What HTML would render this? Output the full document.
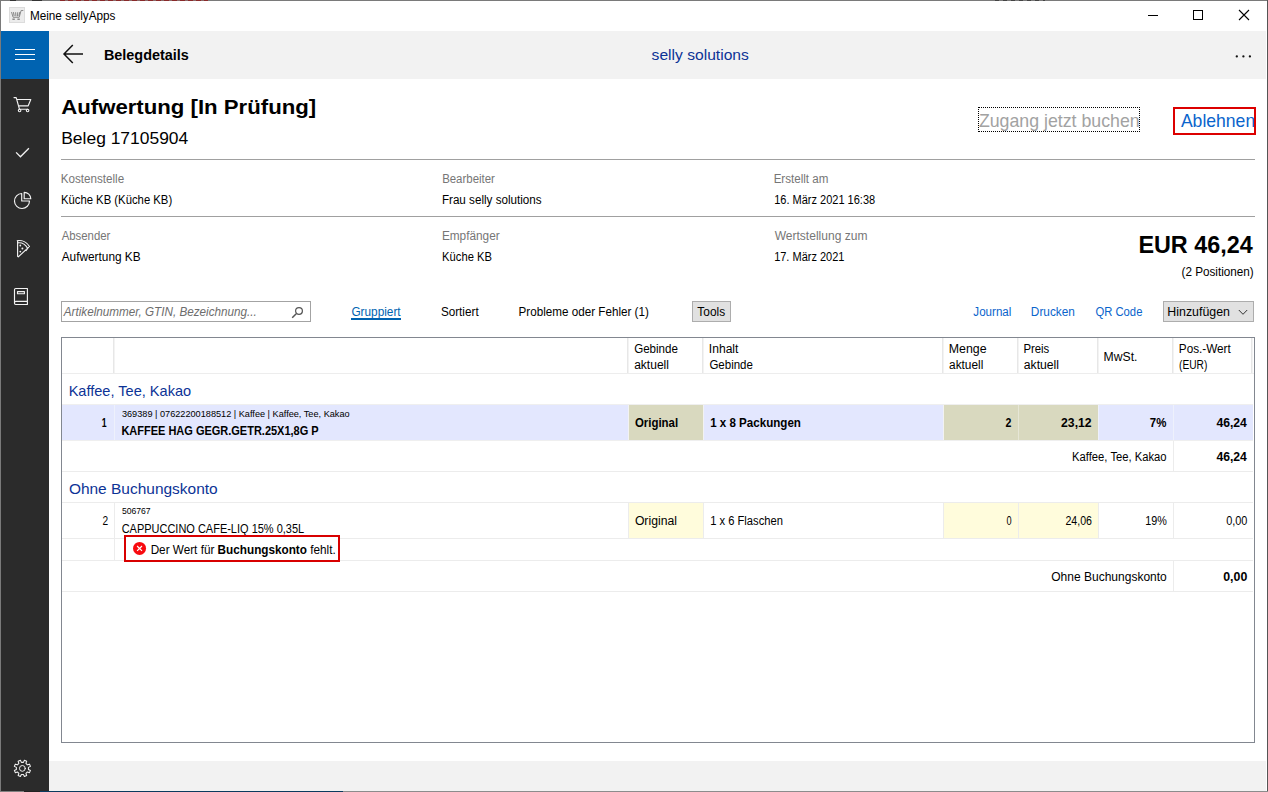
<!DOCTYPE html>
<html lang="de"><head><meta charset="utf-8"><title>Meine sellyApps</title>
<style>
html,body{margin:0;padding:0;}
body{width:1268px;height:792px;position:relative;overflow:hidden;background:#fff;font-family:"Liberation Sans",sans-serif;}
.a{position:absolute;}
.t{position:absolute;white-space:nowrap;line-height:normal;transform-origin:0 0;font-family:"Liberation Sans",sans-serif;}
.hl{position:absolute;height:1px;background:#ececec;}
.vl{position:absolute;width:1px;background:#ececec;}
svg{position:absolute;overflow:visible;}

</style></head>
<body>
<!-- window frame -->
<div class="a" style="left:0;top:0;width:1268px;height:1px;background:#7a7a7a"></div>
<div class="a" style="left:60px;top:0;width:148px;height:1px;background:repeating-linear-gradient(90deg,#8a2a2a 0 5px,#8a6a6a 5px 8px)"></div><div class="a" style="left:10px;top:0;width:6px;height:1px;background:#333"></div><div class="a" style="left:32px;top:0;width:10px;height:1px;background:#333"></div><div class="a" style="left:995px;top:0;width:50px;height:1px;background:repeating-linear-gradient(90deg,#444 0 4px,#7a7a7a 4px 8px)"></div>
<div class="a" style="left:0;top:0;width:1px;height:792px;background:#7a7a7a"></div>
<div class="a" style="left:1267px;top:0;width:1px;height:792px;background:#555"></div>
<div class="a" style="left:0;top:791px;width:1268px;height:1px;background:linear-gradient(90deg,#808080 0 24px,#222 24px 40px,#0b3a5e 40px 343px,#8c8c8c 343px)"></div>
<!-- title bar icon -->
<div class="a" style="left:9px;top:7px;width:16px;height:16px;background:#ececec;border:1px solid #dcdcdc;box-sizing:border-box"></div>
<svg style="left:9px;top:7px" width="16" height="16" viewBox="0 0 16 16" fill="none" stroke="#8c8c8c" stroke-width="1"><path d="M14.300 3.500h-2.200l-1.900 6.800h-6.100l-1.600-5.300"/><path d="M4.400 5.200l.8 4M6.600 5.200l.3 4M8.700 5.200l-.2 4M10.800 5.200l-.8 4" stroke-width="1.100"/><path d="M3.400 12.200h2.400M8.400 12.200h2.400" stroke-width="1.400"/></svg>
<!-- window controls -->
<div class="a" style="left:1148px;top:15px;width:10px;height:1px;background:#000"></div>
<div class="a" style="left:1193px;top:10px;width:10px;height:10px;border:1px solid #000;box-sizing:border-box"></div>
<svg style="left:1239px;top:10px" width="10" height="10" viewBox="0 0 10 10"><path d="M0 0L10 10M10 0L0 10" stroke="#000" stroke-width="1.1" fill="none"/></svg>
<!-- nav bar -->
<div class="a" style="left:49px;top:31px;width:1217px;height:48px;background:#f2f2f2"></div>
<div class="a" style="left:1px;top:31px;width:48px;height:48px;background:#0063b1"></div>
<div class="a" style="left:15px;top:49px;width:20px;height:1px;background:#fff"></div>
<div class="a" style="left:15px;top:54px;width:20px;height:1px;background:#fff"></div>
<div class="a" style="left:15px;top:59px;width:20px;height:1px;background:#fff"></div>
<svg style="left:63px;top:44px" width="21" height="20" viewBox="0 0 21 20"><path d="M20 10H1.2M9.8 1L1 10l8.800 9" fill="none" stroke="#111" stroke-width="1.5"/></svg>
<svg style="left:1230px;top:50px" width="26" height="12" viewBox="0 0 26 12"><circle cx="6.800" cy="6.400" r="1.150" fill="#111"/><circle cx="13.400" cy="6.400" r="1.150" fill="#111"/><circle cx="19.900" cy="6.400" r="1.150" fill="#111"/></svg>
<!-- sidebar -->
<div class="a" style="left:1px;top:79px;width:48px;height:712px;background:#2b2b2b"></div>
<svg style="left:0;top:0" width="49" height="792" viewBox="0 0 49 792" fill="none" stroke="#f2f2f2" stroke-width="1.15" stroke-linejoin="round" stroke-linecap="round">
 <!-- cart -->
 <path d="M14 97.600h2.200l3.300 11.700h8.200M17 99.500h13.800l-2.600 6.300h-9.300"/><circle cx="19.600" cy="110.500" r="1.250"/><circle cx="27.600" cy="110.500" r="1.250"/>
 <!-- check -->
 <path d="M16.100 152.400l4.350 4.400 8.450-8.600" stroke-width="1.300" stroke-linecap="butt" stroke-linejoin="miter"/>
 <!-- pie -->
 <path d="M21.700 193.500A7.500 7.500 0 1 0 29.500 201H21.700Z"/><path d="M24.200 192.300V198.700H30.800A6.600 6.600 0 0 0 24.200 192.300Z"/>
 <!-- pizza -->
 <path d="M17.600 241V256.200L18.300 256.800L28.600 247.400"/><path d="M17.200 240.700C22 240 27 242.300 29.500 246.500"/><path d="M18.200 242.800C22 242.500 25.500 244.500 27.600 248.200"/><path d="M25.200 250.600q1.200 1 2-.8" stroke-width="1"/>
 <g fill="#f2f2f2" stroke="none"><circle cx="20.300" cy="245.500" r="0.900"/><circle cx="22.400" cy="248.500" r="0.950"/><circle cx="20.300" cy="251.600" r="0.900"/></g>
 <!-- book -->
 <path d="M15.700 288.500H27.400V304.500H15.700Q14.500 304.500 14.500 303.300V289.700Q14.500 288.500 15.700 288.500ZM14.500 302.600Q14.500 301.300 15.800 301.300H27.400M17.500 291.600h6.900v2.100h-6.900z"/>
 <!-- gear -->
 <circle cx="22.400" cy="768.400" r="2.900" stroke-width="1"/>
 <path d="M23.41 762.38 L24.41 760.35 L26.67 761.29 L25.94 763.43 L27.37 764.86 L29.51 764.13 L30.45 766.39 L28.42 767.39 L28.42 769.41 L30.45 770.41 L29.51 772.67 L27.37 771.94 L25.94 773.37 L26.67 775.51 L24.41 776.45 L23.41 774.42 L21.39 774.42 L20.39 776.45 L18.13 775.51 L18.86 773.37 L17.43 771.94 L15.29 772.67 L14.35 770.41 L16.38 769.41 L16.38 767.39 L14.35 766.39 L15.29 764.13 L17.43 764.86 L18.86 763.43 L18.13 761.29 L20.39 760.35 L21.39 762.38Z" stroke-width="1.050"/>
</svg>
<!-- footer strip -->
<div class="a" style="left:49px;top:761px;width:1217px;height:30px;background:#f2f2f2"></div>
<!-- heading buttons -->
<div class="a" style="left:978px;top:107px;width:162px;height:25px;border:1px dotted #000;box-sizing:border-box"></div>
<div class="a" style="left:1173px;top:107px;width:83px;height:28px;border:2px solid #dc0000;box-sizing:border-box;z-index:2"></div>
<!-- rules -->
<div class="a" style="left:61px;top:159px;width:1194px;height:1px;background:#a0a0a0"></div>
<div class="a" style="left:61px;top:216px;width:1194px;height:1px;background:#a0a0a0"></div>
<!-- search box -->
<div class="a" style="left:61px;top:301px;width:250px;height:21px;border:1px solid #a3a3a3;box-sizing:border-box;background:#fff"></div>
<svg style="left:291px;top:306px" width="13" height="13" viewBox="0 0 13 13"><circle cx="8" cy="5" r="3.400" fill="none" stroke="#555" stroke-width="1.200"/><path d="M5.500 7.500L1.200 11.800" stroke="#555" stroke-width="1.500"/></svg>
<!-- gruppiert underline -->
<div class="a" style="left:351px;top:318px;width:50px;height:2px;background:#0063b1"></div>
<!-- tools button -->
<div class="a" style="left:692px;top:301px;width:39px;height:21px;border:1px solid #adadad;box-sizing:border-box;background:#e1e1e1"></div>
<!-- hinzufügen -->
<div class="a" style="left:1163px;top:301px;width:91px;height:21px;border:1px solid #adadad;box-sizing:border-box;background:#e1e1e1"></div>
<svg style="left:1238px;top:309px" width="10" height="7" viewBox="0 0 10 7"><path d="M0.800 1L5 5.300L9.200 1" fill="none" stroke="#333" stroke-width="1"/></svg>
<!-- table -->
<div class="a" style="left:61px;top:337px;width:1194px;height:406px;border:1px solid #828790;box-sizing:border-box;background:#fff"></div>
<!-- header lines -->
<div class="hl" style="left:62px;top:373px;width:1192px;background:#ededed"></div>
<div class="vl" style="left:113px;top:338px;height:35px;background:#e7e7e7"></div><div class="vl" style="left:114px;top:338px;height:35px;background:#f3f3f3"></div>
<div class="vl" style="left:627px;top:338px;height:35px;background:#e7e7e7"></div><div class="vl" style="left:628px;top:338px;height:35px;background:#f3f3f3"></div>
<div class="vl" style="left:702px;top:338px;height:35px;background:#e7e7e7"></div><div class="vl" style="left:703px;top:338px;height:35px;background:#f3f3f3"></div>
<div class="vl" style="left:942px;top:338px;height:35px;background:#e7e7e7"></div><div class="vl" style="left:943px;top:338px;height:35px;background:#f3f3f3"></div>
<div class="vl" style="left:1017px;top:338px;height:35px;background:#e7e7e7"></div><div class="vl" style="left:1018px;top:338px;height:35px;background:#f3f3f3"></div>
<div class="vl" style="left:1097px;top:338px;height:35px;background:#e7e7e7"></div><div class="vl" style="left:1098px;top:338px;height:35px;background:#f3f3f3"></div>
<div class="vl" style="left:1172px;top:338px;height:35px;background:#e7e7e7"></div><div class="vl" style="left:1173px;top:338px;height:35px;background:#f3f3f3"></div>
<div class="vl" style="left:1251px;top:338px;height:35px;background:#e7e7e7"></div><div class="vl" style="left:1252px;top:338px;height:35px;background:#f3f3f3"></div>
<!-- row 1 -->
<div class="hl" style="left:62px;top:404px;width:1191px;background:#efefef"></div>
<div class="hl" style="left:62px;top:440px;width:1191px;background:#efefef"></div>
<div class="a" style="left:62px;top:405px;width:1191px;height:35px;background:#e3e7fe"></div>
<div class="a" style="left:629px;top:405px;width:74px;height:35px;background:#d9d9bf"></div>
<div class="a" style="left:944px;top:405px;width:74px;height:35px;background:#d9d9bf"></div>
<div class="a" style="left:1019px;top:405px;width:79px;height:35px;background:#d9d9bf"></div>
<div class="vl" style="left:114px;top:405px;height:35px;background:#eef1fc"></div>
<div class="vl" style="left:628px;top:405px;height:35px;background:#f2f2f2"></div>
<div class="vl" style="left:703px;top:405px;height:35px;background:#f2f2f2"></div>
<div class="vl" style="left:943px;top:405px;height:35px;background:#f2f2f2"></div>
<div class="vl" style="left:1018px;top:405px;height:35px;background:#e6e6d6"></div>
<div class="vl" style="left:1098px;top:405px;height:35px;background:#eef1fc"></div>
<div class="vl" style="left:1173px;top:405px;height:35px;background:#eef1fc"></div>
<!-- subtotal 1 -->
<div class="hl" style="left:62px;top:471px;width:1191px"></div>
<div class="vl" style="left:1173px;top:441px;height:30px"></div>
<!-- group 2 -->
<div class="hl" style="left:62px;top:502px;width:1191px"></div>
<div class="a" style="left:629px;top:503px;width:74px;height:35px;background:#fffcdc"></div>
<div class="a" style="left:944px;top:503px;width:74px;height:35px;background:#fffcdc"></div>
<div class="a" style="left:1019px;top:503px;width:79px;height:35px;background:#fffcdc"></div>
<div class="hl" style="left:62px;top:538px;width:1191px"></div>
<div class="hl" style="left:62px;top:560px;width:1191px"></div>
<div class="hl" style="left:62px;top:591px;width:1191px"></div>
<div class="vl" style="left:114px;top:503px;height:57px"></div>
<div class="vl" style="left:628px;top:503px;height:35px"></div>
<div class="vl" style="left:703px;top:503px;height:35px"></div>
<div class="vl" style="left:943px;top:503px;height:35px"></div>
<div class="vl" style="left:1018px;top:503px;height:35px"></div>
<div class="vl" style="left:1098px;top:503px;height:35px"></div>
<div class="vl" style="left:1173px;top:503px;height:35px"></div>
<div class="vl" style="left:1173px;top:561px;height:30px"></div>
<!-- error box -->
<div class="a" style="left:124px;top:535px;width:216px;height:27px;border:2px solid #d80000;box-sizing:border-box;background:#fff;z-index:2"></div>
<svg style="left:133px;top:542px;z-index:3" width="13" height="13" viewBox="0 0 13 13"><circle cx="6.550" cy="6.450" r="6.500" fill="#f80a0f"/><path d="M4.100 4l4.900 4.900M9 4l-4.900 4.900" stroke="#fff" stroke-width="1.150"/></svg>

<div id="texts">
<span class="t" style="left:29px;top:9px;font-size:12px;color:#000;transform:translateX(0.89px) scaleX(0.9788);">Meine sellyApps</span>
<span class="t" style="left:103px;top:46px;font-size:15px;color:#000;font-weight:700;transform:translateX(0.88px) scaleX(0.9621);">Belegdetails</span>
<span class="t" style="left:651px;top:46px;font-size:15.5px;color:#0c3396;transform:translateX(0.59px) scaleX(1.0079);">selly solutions</span>
<span class="t" style="left:61px;top:96px;font-size:20px;color:#000;font-weight:700;transform:translateX(0.20px) scaleX(1.1090);">Aufwertung [In Prüfung]</span>
<span class="t" style="left:61px;top:129px;font-size:16.8px;color:#000;transform:translateX(0.23px) scaleX(1.0391);">Beleg 17105904</span>
<span class="t" style="left:978px;top:110px;font-size:18.5px;color:#a2a2a2;transform:translateX(0.89px) scaleX(0.9589);">Zugang jetzt buchen</span>
<span class="t" style="left:1180px;top:110px;font-size:18.5px;color:#0a64cc;transform:translateX(0.90px) scaleX(0.9499);">Ablehnen</span>
<span class="t" style="left:60px;top:172px;font-size:12px;color:#767676;transform:translateX(0.63px) scaleX(0.9717);">Kostenstelle</span>
<span class="t" style="left:60px;top:193px;font-size:12px;color:#000;transform:translateX(0.89px) scaleX(0.9425);">Küche KB (Küche KB)</span>
<span class="t" style="left:61px;top:229px;font-size:12px;color:#767676;transform:translateX(0.65px) scaleX(0.9489);">Absender</span>
<span class="t" style="left:61px;top:250px;font-size:12px;color:#000;transform:translateX(0.65px) scaleX(0.9870);">Aufwertung KB</span>
<span class="t" style="left:442px;top:172px;font-size:12px;color:#767676;transform:translateX(0.13px) scaleX(0.9530);">Bearbeiter</span>
<span class="t" style="left:441px;top:193px;font-size:12px;color:#000;transform:translateX(0.89px) scaleX(0.9713);">Frau selly solutions</span>
<span class="t" style="left:441px;top:229px;font-size:12px;color:#767676;transform:translateX(0.88px) scaleX(0.9841);">Empfänger</span>
<span class="t" style="left:442px;top:250px;font-size:12px;color:#000;transform:translateX(0.12px) scaleX(0.9330);">Küche KB</span>
<span class="t" style="left:773px;top:172px;font-size:12px;color:#767676;transform:translateX(0.63px) scaleX(0.9667);">Erstellt am</span>
<span class="t" style="left:774px;top:193px;font-size:12px;color:#000;transform:translateX(0.14px) scaleX(0.9177);">16. März 2021 16:38</span>
<span class="t" style="left:774px;top:229px;font-size:12px;color:#767676;transform:translateX(0.65px) scaleX(1.0030);">Wertstellung zum</span>
<span class="t" style="left:774px;top:250px;font-size:12px;color:#000;transform:translateX(0.14px) scaleX(0.9160);">17. März 2021</span>
<span class="t" style="left:1138px;top:231px;font-size:24px;color:#000;font-weight:700;transform:translateX(0.38px) scaleX(0.9733);">EUR 46,24</span>
<span class="t" style="left:1181px;top:265px;font-size:12px;color:#000;transform:translateX(0.48px) scaleX(0.9761);">(2 Positionen)</span>
<span class="t" style="left:63px;top:305px;font-size:12px;color:#6d6d6d;font-style:italic;transform:translateX(0.75px) scaleX(0.9744);">Artikelnummer, GTIN, Bezeichnung...</span>
<span class="t" style="left:351px;top:305px;font-size:12px;color:#0063b1;transform:translateX(0.39px) scaleX(0.9846);">Gruppiert</span>
<span class="t" style="left:440px;top:305px;font-size:12px;color:#000;transform:translateX(0.89px) scaleX(0.9761);">Sortiert</span>
<span class="t" style="left:518px;top:305px;font-size:12px;color:#000;transform:translateX(0.59px) scaleX(0.9717);">Probleme oder Fehler (1)</span>
<span class="t" style="left:697px;top:305px;font-size:12px;color:#000;transform:translateX(0.35px) scaleX(0.9911);">Tools</span>
<span class="t" style="left:973px;top:305px;font-size:12px;color:#0a64cc;transform:translateX(0.34px) scaleX(0.9662);">Journal</span>
<span class="t" style="left:1030px;top:305px;font-size:12px;color:#0a64cc;transform:translateX(0.87px) scaleX(0.9859);">Drucken</span>
<span class="t" style="left:1095px;top:305px;font-size:12px;color:#0a64cc;transform:translateX(0.39px) scaleX(0.9399);">QR Code</span>
<span class="t" style="left:1167px;top:305px;font-size:12px;color:#000;transform:translateX(0.37px) scaleX(1.0302);">Hinzufügen</span>
<span class="t" style="left:634px;top:342px;font-size:12px;color:#000;transform:translateX(0.14px) scaleX(0.9646);">Gebinde</span>
<span class="t" style="left:634px;top:358px;font-size:12px;color:#000;transform:translateX(0.13px) scaleX(1.0032);">aktuell</span>
<span class="t" style="left:708px;top:342px;font-size:12px;color:#000;transform:translateX(0.86px) scaleX(1.0064);">Inhalt</span>
<span class="t" style="left:709px;top:358px;font-size:12px;color:#000;transform:translateX(0.39px) scaleX(0.9591);">Gebinde</span>
<span class="t" style="left:948px;top:342px;font-size:12px;color:#000;transform:translateX(0.77px) scaleX(1.0301);">Menge</span>
<span class="t" style="left:949px;top:358px;font-size:12px;color:#000;transform:translateX(0.04px) scaleX(0.9883);">aktuell</span>
<span class="t" style="left:1023px;top:342px;font-size:12px;color:#000;transform:translateX(0.45px) scaleX(0.9443);">Preis</span>
<span class="t" style="left:1023px;top:358px;font-size:12px;color:#000;transform:translateX(0.73px) scaleX(1.0176);">aktuell</span>
<span class="t" style="left:1103px;top:350px;font-size:12px;color:#000;transform:translateX(0.60px) scaleX(1.0157);">MwSt.</span>
<span class="t" style="left:1178px;top:342px;font-size:12px;color:#000;transform:translateX(0.79px) scaleX(0.9791);">Pos.-Wert</span>
<span class="t" style="left:1179px;top:358px;font-size:12px;color:#000;transform:translateX(0.02px) scaleX(0.8491);">(EUR)</span>
<span class="t" style="left:68px;top:382px;font-size:15px;color:#0c3396;transform:translateX(0.63px) scaleX(0.9707);">Kaffee, Tee, Kakao</span>
<span class="t" style="left:101px;top:416px;font-size:12px;color:#000;font-weight:700;transform:translateX(0.80px) scaleX(0.7279);">1</span>
<span class="t" style="left:121px;top:409px;font-size:9px;color:#000;transform:translateX(0.90px) scaleX(1.0180);">369389 | 07622200188512 | Kaffee | Kaffee, Tee, Kakao</span>
<span class="t" style="left:121px;top:424px;font-size:12px;color:#000;font-weight:700;transform:translateX(0.40px) scaleX(0.9158);">KAFFEE HAG GEGR.GETR.25X1,8G P</span>
<span class="t" style="left:634px;top:416px;font-size:12px;color:#000;font-weight:700;transform:translateX(0.88px) scaleX(0.9547);">Original</span>
<span class="t" style="left:710px;top:416px;font-size:12px;color:#000;font-weight:700;transform:translateX(0.14px) scaleX(0.9652);">1 x 8 Packungen</span>
<span class="t" style="left:1005px;top:416px;font-size:12px;color:#000;font-weight:700;transform:translateX(0.62px) scaleX(0.8827);">2</span>
<span class="t" style="left:1061px;top:416px;font-size:12px;color:#000;font-weight:700;transform:translateX(0.09px) scaleX(1.0163);">23,12</span>
<span class="t" style="left:1149px;top:416px;font-size:12px;color:#000;font-weight:700;transform:translateX(0.87px) scaleX(0.9537);">7%</span>
<span class="t" style="left:1216px;top:416px;font-size:12px;color:#000;font-weight:700;transform:translateX(0.40px) scaleX(1.0157);">46,24</span>
<span class="t" style="left:1072px;top:450px;font-size:12px;color:#000;transform:translateX(0.09px) scaleX(0.9361);">Kaffee, Tee, Kakao</span>
<span class="t" style="left:1216px;top:450px;font-size:12px;color:#000;font-weight:700;transform:translateX(0.40px) scaleX(1.0157);">46,24</span>
<span class="t" style="left:68px;top:480px;font-size:15px;color:#0c3396;transform:translateX(0.89px) scaleX(1.0311);">Ohne Buchungskonto</span>
<span class="t" style="left:102px;top:514px;font-size:12px;color:#000;transform:translateX(0.58px) scaleX(0.8449);">2</span>
<span class="t" style="left:121px;top:506px;font-size:9px;color:#000;transform:translateX(0.89px) scaleX(0.9576);">506767</span>
<span class="t" style="left:121px;top:522px;font-size:12px;color:#000;transform:translateX(0.65px) scaleX(0.9152);">CAPPUCCINO CAFE-LIQ 15% 0,35L</span>
<span class="t" style="left:634px;top:514px;font-size:12px;color:#000;transform:translateX(0.88px) scaleX(1.0167);">Original</span>
<span class="t" style="left:710px;top:514px;font-size:12px;color:#000;transform:translateX(0.13px) scaleX(0.9325);">1 x 6 Flaschen</span>
<span class="t" style="left:1006px;top:514px;font-size:12px;color:#000;transform:translateX(0.61px) scaleX(0.7636);">0</span>
<span class="t" style="left:1065px;top:514px;font-size:12px;color:#000;transform:translateX(0.42px) scaleX(0.8838);">24,06</span>
<span class="t" style="left:1145px;top:514px;font-size:12px;color:#000;transform:translateX(0.15px) scaleX(0.8974);">19%</span>
<span class="t" style="left:1226px;top:514px;font-size:12px;color:#000;transform:translateX(0.13px) scaleX(0.9110);">0,00</span>
<span class="t" style="left:150px;top:543px;font-size:12px;color:#000;transform:translateX(0.64px) scaleX(0.9782);z-index:3;">Der Wert für <b>Buchungskonto</b> fehlt.</span>
<span class="t" style="left:1051px;top:570px;font-size:12px;color:#000;transform:translateX(0.25px) scaleX(1.0008);">Ohne Buchungskonto</span>
<span class="t" style="left:1223px;top:570px;font-size:12px;color:#000;font-weight:700;transform:translateX(0.23px) scaleX(1.0294);">0,00</span>
</div>
</body></html>
